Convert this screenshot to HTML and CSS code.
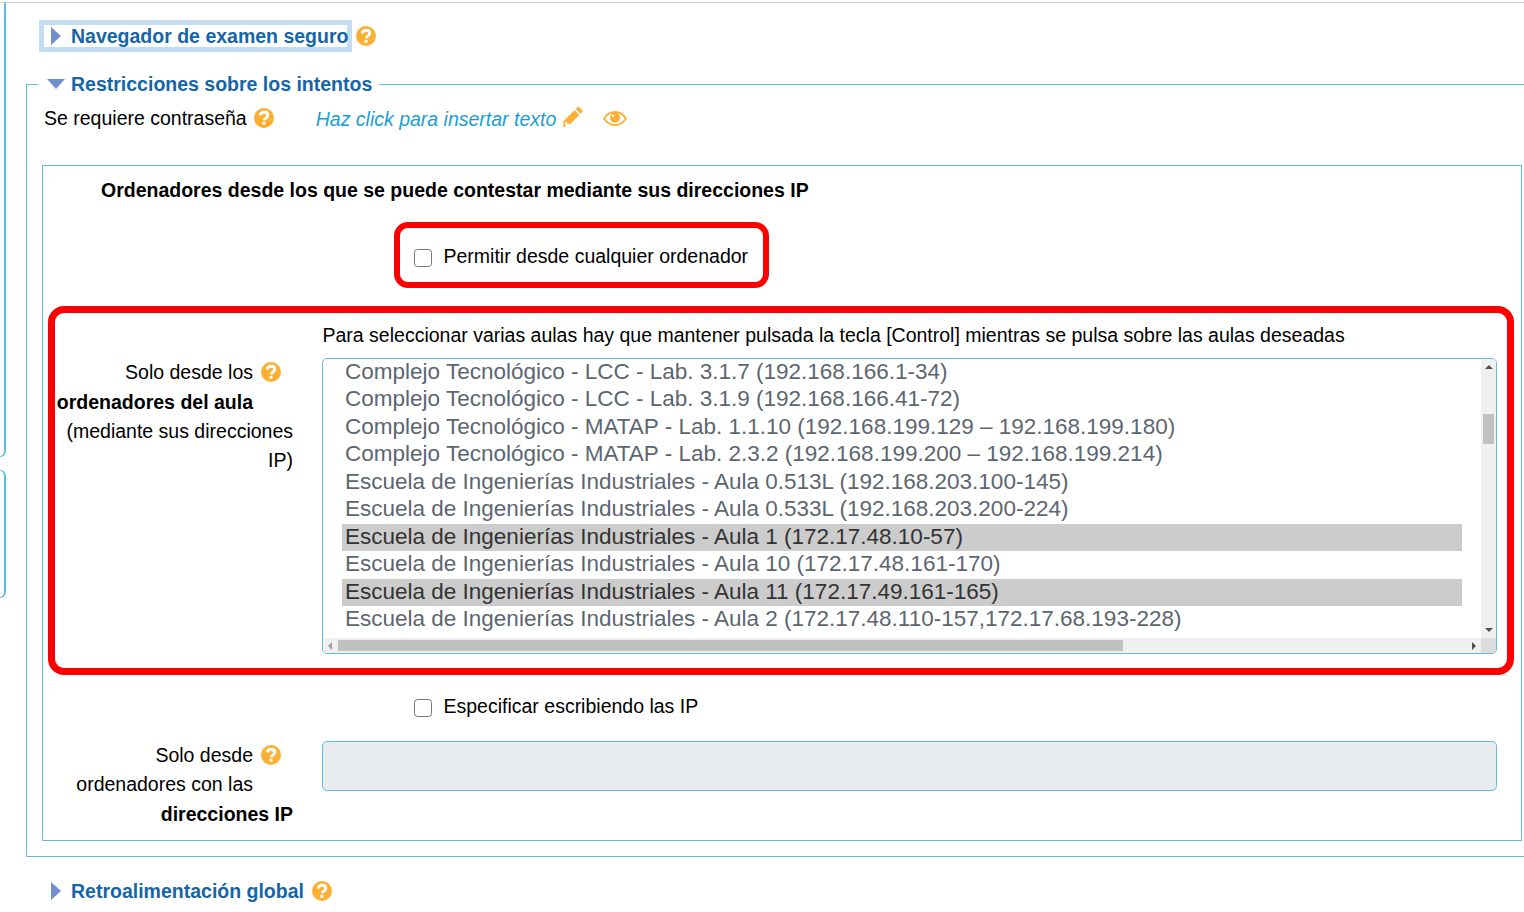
FILE: index.html
```html
<!DOCTYPE html>
<html lang="es">
<head>
    <meta charset="UTF-8">
    <title>Restricciones sobre los intentos</title>
    <link rel="stylesheet" href="styles.css">
</head>
<body>
    <svg class="defs" width="0" height="0">
        <symbol id="help" viewBox="0 0 20 20">
            <circle cx="10" cy="10" r="10" fill="#fbb034"/>
            <path d="M6.300 7.500c.2-2.100 1.700-3.300 3.800-3.300 2.200 0 3.700 1.300 3.700 3 0 1.500-.9 2.200-1.900 2.900-.9.600-1.500 1.100-1.500 2.200" fill="none" stroke="#fff" stroke-width="2.900"/>
            <rect x="8.500" y="13.700" width="3" height="3" rx=".4" fill="#fff"/>
        </symbol>
    </svg>

    <div class="page">
        <div class="side">
            <div class="side-box side-first"></div>
            <div class="side-box side-second"></div>
        </div>

        <div class="main">
            <div class="section-head">
                <a class="toggle focused"><span class="arrow-right"></span>Navegador de examen seguro</a>
                <svg class="help"><use href="#help"/></svg>
            </div>

            <fieldset class="attempts">
                <legend><span class="arrow-down"></span>Restricciones sobre los intentos</legend>

                <div class="password-row">
                    <span>Se requiere contraseña</span>
                    <svg class="help"><use href="#help"/></svg>
                    <em class="click-text">Haz click para insertar texto</em>
                    <svg class="pencil" viewBox="0 0 20 22">
                        <path d="M14.6 1.2c.5-.5 1.2-.5 1.7 0l3 3c.5.5.5 1.200 0 1.700l-1.900 1.900-4.700-4.700zM11.600 4.200l4.700 4.700L6 19.200l-5.800 2 .3-6.100zM2.500 15.800l-.4 3.400 1.100 1 3.200-1.100-.4-1.600-1.900-.1-.1-1.600z" fill="#fbb034"/>
                    </svg>
                    <svg class="eye" viewBox="0 0 24 15">
                        <path d="M1 7.500C3.600 3.400 7.400 1 12 1s8.400 2.400 11 6.500C20.400 11.600 16.600 14 12 14S3.600 11.600 1 7.500z" fill="none" stroke="#fbb034" stroke-width="1.800"/>
                        <circle cx="12" cy="6.800" r="5" fill="#fbb034"/>
                        <circle cx="10" cy="4.800" r="1.300" fill="#fff"/>
                    </svg>
                </div>

                <div class="ip-box">
                    <h3 class="ip-title">Ordenadores desde los que se puede contestar mediante sus direcciones IP</h3>

                    <label class="mark-small check-row">
                        <input type="checkbox">
                        <span>Permitir desde cualquier ordenador</span>
                    </label>

                    <div class="mark-large">
                        <div class="room-hint">Para seleccionar varias aulas hay que mantener pulsada la tecla [Control] mientras se pulsa sobre las aulas deseadas</div>
                        <div class="field-row">
                            <div class="field-label room-label">
                                <span class="label-line with-help">Solo desde los <svg class="help"><use href="#help"/></svg></span>
                                <span class="label-line short"><b>ordenadores del aula</b></span>
                                <span class="label-line">(mediante sus direcciones</span>
                                <span class="label-line">IP)</span>
                            </div>
                            <div class="listbox">
                                <div class="options">
                                    <div class="option">Complejo Tecnológico - LCC - Lab. 3.1.7 (192.168.166.1-34)</div>
                                    <div class="option">Complejo Tecnológico - LCC - Lab. 3.1.9 (192.168.166.41-72)</div>
                                    <div class="option">Complejo Tecnológico - MATAP - Lab. 1.1.10 (192.168.199.129 – 192.168.199.180)</div>
                                    <div class="option">Complejo Tecnológico - MATAP - Lab. 2.3.2 (192.168.199.200 – 192.168.199.214)</div>
                                    <div class="option">Escuela de Ingenierías Industriales - Aula 0.513L (192.168.203.100-145)</div>
                                    <div class="option">Escuela de Ingenierías Industriales - Aula 0.533L (192.168.203.200-224)</div>
                                    <div class="option selected">Escuela de Ingenierías Industriales - Aula 1 (172.17.48.10-57)</div>
                                    <div class="option">Escuela de Ingenierías Industriales - Aula 10 (172.17.48.161-170)</div>
                                    <div class="option selected">Escuela de Ingenierías Industriales - Aula 11 (172.17.49.161-165)</div>
                                    <div class="option">Escuela de Ingenierías Industriales - Aula 2 (172.17.48.110-157,172.17.68.193-228)</div>
                                </div>
                                <div class="vbar">
                                    <span class="tri-up"></span>
                                    <span class="vthumb"></span>
                                    <span class="tri-down"></span>
                                </div>
                                <div class="hbar">
                                    <span class="tri-left"></span>
                                    <span class="hthumb"></span>
                                    <span class="tri-right"></span>
                                </div>
                                <div class="corner"></div>
                            </div>
                        </div>
                    </div>

                    <label class="check-row check-plain">
                        <input type="checkbox">
                        <span>Especificar escribiendo las IP</span>
                    </label>

                    <div class="field-row ip-row">
                        <div class="field-label">
                            <span class="label-line with-help">Solo desde <svg class="help"><use href="#help"/></svg></span>
                            <span class="label-line short">ordenadores con las</span>
                            <span class="label-line"><b>direcciones IP</b></span>
                        </div>
                        <div class="ip-input"></div>
                    </div>
                </div>
            </fieldset>

            <div class="section-head feedback">
                <a class="toggle"><span class="arrow-right"></span>Retroalimentación global</a>
                <svg class="help"><use href="#help"/></svg>
            </div>
        </div>
    </div>
</body>
</html>
```

FILE: styles.css
```css
* {
    box-sizing: border-box;
}

html, body {
    margin: 0;
    height: 912px;
    overflow: hidden;
    background-color: #ffffff;
}

body {
    font-family: "Liberation Sans", Arial, sans-serif;
    font-size: 19.5px;
    color: #000000;
}

.defs {
    display: block;
    height: 0;
}

.page {
    display: flex;
    margin-top: 2px;
    border-top: 1px solid #cccccc;
    height: 909px;
}

.side {
    width: 6px;
    flex-shrink: 0;
}

.side-box {
    width: 6px;
    border-right: 2px solid #5bc0de;
    border-bottom: 1px solid #5bc0de;
    border-bottom-right-radius: 6px;
}

.side-first {
    height: 454px;
}

.side-second {
    height: 128px;
    margin-top: 13px;
    border-top: 1px solid #5bc0de;
    border-top-right-radius: 6px;
}

.main {
    flex: 1;
    min-width: 0;
    padding-left: 20px;
}

.section-head {
    display: flex;
    align-items: center;
    height: 32px;
    margin-top: 17px;
    margin-left: 13px;
}

.toggle {
    display: flex;
    align-items: center;
    height: 32px;
    padding-left: 12px;
    padding-right: 4px;
    font-weight: bold;
    color: #1565a8;
}

.focused {
    box-shadow: inset 0 0 0 5px #c3dcf2;
}

.arrow-right {
    width: 0;
    height: 0;
    margin-right: 10px;
    border-left: 10px solid #6f8fcf;
    border-top: 9px solid transparent;
    border-bottom: 9px solid transparent;
}

.arrow-down {
    display: inline-block;
    width: 0;
    height: 0;
    margin-right: 6px;
    vertical-align: 2px;
    border-top: 10px solid #6f8fcf;
    border-left: 9px solid transparent;
    border-right: 9px solid transparent;
}

.help {
    width: 20px;
    height: 20px;
    flex-shrink: 0;
}

.section-head .help {
    margin-left: 4px;
}

.attempts {
    margin: 20px -4px 0 0;
    padding: 0 0 15px 0;
    min-width: 0;
    height: 785px;
    border: 1px solid #5bc0de;
}

legend {
    margin-left: 11px;
    padding: 0 7px 0 9px;
    font-weight: bold;
    color: #1565a8;
    line-height: 24px;
}

.password-row {
    display: flex;
    align-items: center;
    height: 30px;
    margin-top: 7px;
    padding-left: 17px;
}

.password-row .help {
    margin-left: 7px;
}

.click-text {
    margin-left: 42px;
    padding-top: 2px;
    color: #1a9fd4;
}

.pencil {
    width: 20px;
    height: 22px;
    margin-left: 7px;
    margin-top: -2px;
}

.eye {
    width: 24px;
    height: 15px;
    margin-left: 20px;
    margin-top: 1px;
}

.ip-box {
    height: 676px;
    margin-top: 32px;
    margin-left: 15px;
    margin-right: 5px;
    border: 1px solid #5bc0de;
}

.ip-title {
    margin: 12px 0 0 58px;
    font-size: 19.5px;
    line-height: 24px;
    color: #000000;
}

.check-row {
    display: flex;
    align-items: center;
}

.check-row input {
    appearance: none;
    width: 18px;
    height: 18px;
    margin: 4px 11.5px 0 0;
    background-color: #ffffff;
    border: 1.5px solid #767676;
    border-radius: 3.5px;
}

.mark-small {
    width: 375px;
    height: 66px;
    margin: 20px 0 0 351px;
    padding-left: 14px;
    padding-top: 2px;
    border: 6px solid #ff0000;
    border-radius: 14px;
}

.mark-large {
    height: 369px;
    margin: 18px 7px 0 5px;
    border: 7px solid #ff0000;
    border-radius: 16px;
}

.room-hint {
    margin: 7px 0 0 267.5px;
    line-height: 30px;
}

.field-row {
    display: flex;
}

.field-label {
    width: 238px;
    flex-shrink: 0;
    text-align: right;
    line-height: 29.3px;
}

.room-label {
    padding-top: 8.4px;
}

.label-line {
    display: block;
    white-space: nowrap;
}

.with-help {
    display: flex;
    justify-content: flex-end;
    align-items: center;
    gap: 8px;
    padding-right: 12px;
}

.with-help .help {
    margin-top: -2px;
}

.short {
    padding-right: 40px;
}

.listbox {
    display: grid;
    grid-template-columns: 1fr 15px;
    grid-template-rows: 1fr 15px;
    width: 1175px;
    height: 296px;
    margin-top: 8px;
    margin-left: 29px;
    border: 1px solid #5bc0de;
    border-radius: 5px;
    overflow: hidden;
}

.options {
    margin-top: -0.5px;
    padding: 0 19px;
    overflow: hidden;
    font-size: 22.5px;
    color: #5c6670;
}

.option {
    height: 27.5px;
    padding-left: 3px;
    line-height: 26px;
    white-space: nowrap;
}

.selected {
    background-color: #cccccc;
    color: #333333;
}

.vbar {
    display: flex;
    flex-direction: column;
    align-items: center;
    background-color: #f0f0f0;
    padding-top: 6px;
}

.vthumb {
    width: 11px;
    height: 30px;
    margin-top: 45px;
    background-color: #c1c1c1;
}

.tri-up {
    border-left: 4px solid transparent;
    border-right: 4px solid transparent;
    border-bottom: 4px solid #505050;
}

.tri-down {
    margin-top: auto;
    margin-bottom: 6px;
    border-left: 4px solid transparent;
    border-right: 4px solid transparent;
    border-top: 4px solid #505050;
}

.hbar {
    display: flex;
    align-items: center;
    background-color: #f0f0f0;
    padding: 0 5px;
}

.hthumb {
    width: 785px;
    height: 11px;
    margin-left: 6px;
    background-color: #c1c1c1;
}

.tri-left {
    border-top: 4px solid transparent;
    border-bottom: 4px solid transparent;
    border-right: 4px solid #a0a0a0;
}

.tri-right {
    margin-left: auto;
    border-top: 4px solid transparent;
    border-bottom: 4px solid transparent;
    border-left: 4px solid #505050;
}

.corner {
    background-color: #dcdcdc;
}

.check-plain {
    height: 30px;
    margin: 16px 0 0 371px;
}

.ip-row {
    margin-top: 20px;
}

.ip-row .field-label {
    width: 250px;
}

.ip-input {
    width: 1175px;
    height: 50px;
    margin-top: 0;
    margin-left: 29px;
    background-color: #e9ecef;
    border: 1px solid #5bc0de;
    border-radius: 5px;
}

.feedback {
    margin-top: 18px;
    margin-left: 13px;
}
```
